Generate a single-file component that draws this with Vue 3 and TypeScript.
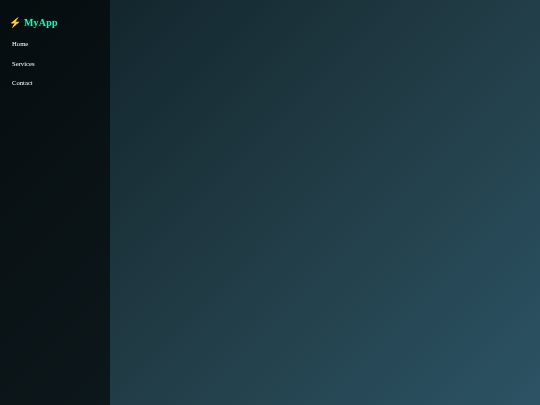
<script setup lang="ts">
const links: string[] = ['Home', 'Services', 'Contact']
</script>

<template>
  <div class="page">
    <aside class="sidebar">
      <h2 class="logo">⚡ MyApp</h2>
      <nav class="nav">
        <a v-for="l in links" :key="l" class="link" href="#">{{ l }}</a>
      </nav>
    </aside>
    <main class="main"></main>
  </div>
</template>

<style>
html, body { margin: 0; padding: 0; }
</style>

<style scoped>
.page {
  width: 540px;
  height: 405px;
  display: flex;
  overflow: hidden;
  background: linear-gradient(135deg, #0f2027, #203a43, #2c5364);
  font-family: "Liberation Serif", "Times New Roman", serif;
}
.sidebar {
  width: 110px;
  flex: none;
  box-sizing: border-box;
  padding: 16px 8.5px;
  background: rgba(0, 0, 0, 0.6);
  display: flex;
  flex-direction: column;
}
.logo {
  margin: 0 0 9px;
  font-size: 10px;
  line-height: 14px;
  font-weight: bold;
  letter-spacing: 0.2px;
  word-spacing: 0.5px;
  color: #00ffc3;
  filter: blur(0.4px);
}
.nav { display: flex; flex-direction: column; gap: 9.5px; }
.link {
  color: #fff;
  font-size: 6.67px;
  line-height: 10px;
  padding: 0 3.5px;
  text-decoration: none;
  filter: blur(0.4px);
}
.main { flex: 1; }
</style>
